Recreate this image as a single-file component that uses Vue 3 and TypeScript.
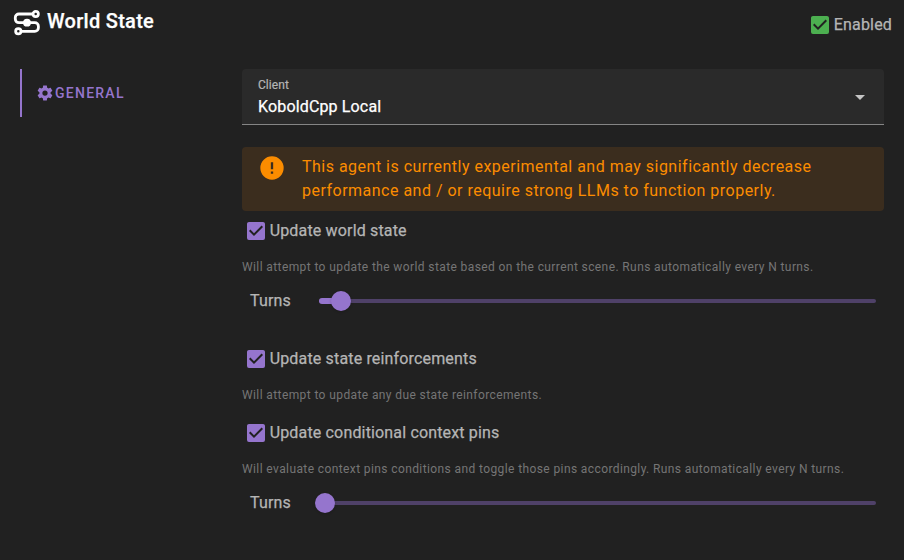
<script setup lang="ts">
interface Slider {
  value: number
  min: number
  max: number
}

interface Action {
  label: string
  description: string
  slider?: Slider
}

const actions: Action[] = [
  {
    label: 'Update world state',
    description: 'Will attempt to update the world state based on the current scene. Runs automatically every N turns.',
    slider: { value: 4, min: 0, max: 100 },
  },
  {
    label: 'Update state reinforcements',
    description: 'Will attempt to update any due state reinforcements.',
  },
  {
    label: 'Update conditional context pins',
    description: 'Will evaluate context pins conditions and toggle those pins accordingly. Runs automatically every N turns.',
    slider: { value: 1, min: 0, max: 100 },
  },
]

const percent = (s: Slider): string => `${((s.value - s.min) / (s.max - s.min)) * 100}%`

const checkbox =
  'M10,17L5,12L6.41,10.58L10,14.17L17.59,6.58L19,8M19,3H5C3.89,3 3,3.89 3,5V19A2,2 0 0,0 5,21H19A2,2 0 0,0 21,19V5C21,3.89 20.1,3 19,3Z'
const cog =
  'M12,15.5A3.5,3.5 0 0,1 8.5,12A3.5,3.5 0 0,1 12,8.5A3.5,3.5 0 0,1 15.5,12A3.5,3.5 0 0,1 12,15.5M19.43,12.97C19.47,12.65 19.5,12.33 19.5,12C19.5,11.67 19.47,11.34 19.43,11L21.54,9.37C21.73,9.22 21.78,8.95 21.66,8.73L19.66,5.27C19.54,5.05 19.27,4.96 19.05,5.05L16.56,6.05C16.04,5.66 15.5,5.32 14.87,5.07L14.5,2.42C14.46,2.18 14.25,2 14,2H10C9.75,2 9.54,2.18 9.5,2.42L9.13,5.07C8.5,5.32 7.96,5.66 7.44,6.05L4.95,5.05C4.73,4.96 4.46,5.05 4.34,5.27L2.34,8.73C2.21,8.95 2.27,9.22 2.46,9.37L4.57,11C4.53,11.34 4.5,11.67 4.5,12C4.5,12.33 4.53,12.65 4.57,12.97L2.46,14.63C2.27,14.78 2.21,15.05 2.34,15.27L4.34,18.73C4.46,18.95 4.73,19.03 4.95,18.95L7.44,17.94C7.96,18.34 8.5,18.68 9.13,18.93L9.5,21.58C9.54,21.82 9.75,22 10,22H14C14.25,22 14.46,21.82 14.5,21.58L14.87,18.93C15.5,18.67 16.04,18.34 16.56,17.94L19.05,18.95C19.27,19.03 19.54,18.95 19.66,18.73L21.66,15.27C21.78,15.05 21.73,14.78 21.54,14.63L19.43,12.97Z'
const alertCircle =
  'M13,13H11V7H13M13,17H11V15H13M12,2A10,10 0 0,0 2,12A10,10 0 0,0 12,22A10,10 0 0,0 22,12A10,10 0 0,0 12,2Z'
</script>

<template>
  <div class="panel">
    <header class="header">
      <div class="heading">
        <svg class="logo" viewBox="0 0 30 30">
          <path
            class="route"
            d="M21 6H6.9A3.6 3.6 0 0 0 3.3 9.6V11.1A3.6 3.6 0 0 0 6.9 14.7H22.8A3.6 3.6 0 0 1 26.4 18.3V19.7A3.6 3.6 0 0 1 22.8 23.3H9"
          />
          <circle class="stop" cx="23.7" cy="6" r="2.65" />
          <circle class="stop" cx="6.3" cy="23.3" r="2.65" />
          <circle class="node" cx="15" cy="14.7" r="3.9" />
        </svg>
        <h1 class="title">World State</h1>
      </div>
      <div class="check enabled">
        <svg class="box" viewBox="0 0 24 24"><path :d="checkbox" /></svg>
        <span class="check-label">Enabled</span>
      </div>
    </header>

    <div class="body">
      <nav class="tabs">
        <div class="tab">
          <svg class="cog" viewBox="0 0 24 24"><path :d="cog" /></svg>
          <span>GENERAL</span>
        </div>
      </nav>

      <main class="content">
        <div class="select">
          <div class="field">
            <span class="field-label">Client</span>
            <span class="field-value">KoboldCpp Local</span>
          </div>
          <svg class="caret" viewBox="0 0 24 24"><path d="M7,10L12,15L17,10H7Z" /></svg>
        </div>

        <div class="alert">
          <svg class="alert-icon" viewBox="0 0 24 24"><path :d="alertCircle" /></svg>
          <p class="alert-text">
            This agent is currently experimental and may significantly decrease performance and / or require strong
            LLMs to function properly.
          </p>
        </div>

        <section v-for="a in actions" :key="a.label" class="action">
          <div class="check">
            <svg class="box" viewBox="0 0 24 24"><path :d="checkbox" /></svg>
            <span class="check-label">{{ a.label }}</span>
          </div>
          <p class="description">{{ a.description }}</p>
          <div v-if="a.slider" class="slider">
            <span class="slider-label">Turns</span>
            <div class="track">
              <div class="fill" :style="{ width: percent(a.slider) }"></div>
              <div class="thumb" :style="{ left: percent(a.slider) }"></div>
            </div>
          </div>
        </section>
      </main>
    </div>
  </div>
</template>

<style>
body {
  background: #212121;
}
</style>

<style scoped>
.panel {
  box-sizing: border-box;
  height: 560px;
  padding: 0 20px;
  overflow: hidden;
  background: #212121;
  color: #fff;
  font-family: Roboto, sans-serif;
}
.header {
  display: flex;
  justify-content: space-between;
  height: 69px;
  margin: 0 -8px;
}
.heading {
  display: flex;
  height: 46px;
}
.logo {
  width: 30px;
  height: 30px;
  margin-top: 8px;
}
.route,
.stop {
  fill: none;
  stroke: #fff;
  stroke-width: 2.8;
}
.stop {
  fill: #212121;
}
.node {
  fill: #fff;
}
.title {
  margin: 5px 0 0 5px;
  font-size: 20px;
  font-weight: 500;
  line-height: 32px;
  letter-spacing: 0.28px;
  -webkit-text-stroke: 0.25px currentColor;
}
.check {
  display: flex;
  align-items: center;
  height: 40px;
  padding-left: 2px;
  color: #b5b5b5;
}
.box {
  flex: none;
  width: 24px;
  height: 24px;
  fill: #9575cd;
}
.enabled {
  margin-top: 5px;
}
.enabled .box {
  fill: #4caf50;
}
.check-label {
  margin-left: 1.7px;
  font-size: 16px;
  line-height: 24px;
  letter-spacing: 0.16px;
  -webkit-text-stroke: 0.25px currentColor;
}
.body {
  display: flex;
}
.tabs {
  width: 222px;
}
.tab {
  box-sizing: border-box;
  display: flex;
  align-items: center;
  height: 48px;
  padding-left: 14px;
  border-left: 2px solid #9575cd;
  color: #9575cd;
  font-size: 14px;
  font-weight: 500;
  letter-spacing: 1.25px;
}
.cog {
  width: 18px;
  height: 18px;
  margin-right: 1px;
  fill: #9575cd;
}
.content {
  width: 642px;
}
.select {
  box-sizing: border-box;
  display: flex;
  align-items: center;
  justify-content: space-between;
  height: 56px;
  padding: 0 12px 0 16px;
  border-bottom: 1px solid #858585;
  border-radius: 4px 4px 0 0;
  background: #2a2a2a;
}
.field {
  display: flex;
  flex-direction: column;
  padding-top: 2px;
}
.field-label {
  color: #b5b5b5;
  font-size: 12px;
  line-height: 18px;
  letter-spacing: 0.05px;
  -webkit-text-stroke: 0.2px currentColor;
}
.field-value {
  padding-top: 1px;
  font-size: 16px;
  line-height: 24px;
  letter-spacing: 0.15px;
  -webkit-text-stroke: 0.25px currentColor;
}
.caret {
  width: 24px;
  height: 24px;
  fill: #c4c4c4;
}
.alert {
  box-sizing: border-box;
  display: flex;
  height: 64px;
  margin-top: 22px;
  padding: 8px 16px;
  border-radius: 4px;
  background: #3b2d1e;
  color: #fb8c00;
}
.alert-icon {
  flex: none;
  width: 28px;
  height: 28px;
  margin: -1px 16px 0 0;
  fill: #fb8c00;
}
.alert-text {
  margin: 0;
  font-size: 16px;
  line-height: 24px;
  letter-spacing: 0.49px;
}
.description {
  margin: 0;
  padding: 6px 0 8px;
  color: #757575;
  font-size: 12px;
  line-height: 20px;
  letter-spacing: 0.395px;
  white-space: nowrap;
}
.slider {
  display: flex;
  align-items: center;
  height: 32px;
  margin-bottom: 22px;
  padding: 0 8px;
}
.slider-label {
  width: 69px;
  padding-bottom: 2px;
  color: #b5b5b5;
  font-size: 16px;
  letter-spacing: 0.15px;
  -webkit-text-stroke: 0.25px currentColor;
}
.track {
  position: relative;
  flex: 1;
  height: 4px;
  border-radius: 2px;
  background: #4f4168;
}
.fill {
  height: 6px;
  margin-top: -1px;
  border-radius: 3px;
  background: #9575cd;
}
.thumb {
  position: absolute;
  top: -8px;
  width: 20px;
  height: 20px;
  margin-left: -10px;
  border-radius: 50%;
  background: #9575cd;
  box-shadow: 0 1px 3px rgba(0, 0, 0, 0.2);
}
</style>
